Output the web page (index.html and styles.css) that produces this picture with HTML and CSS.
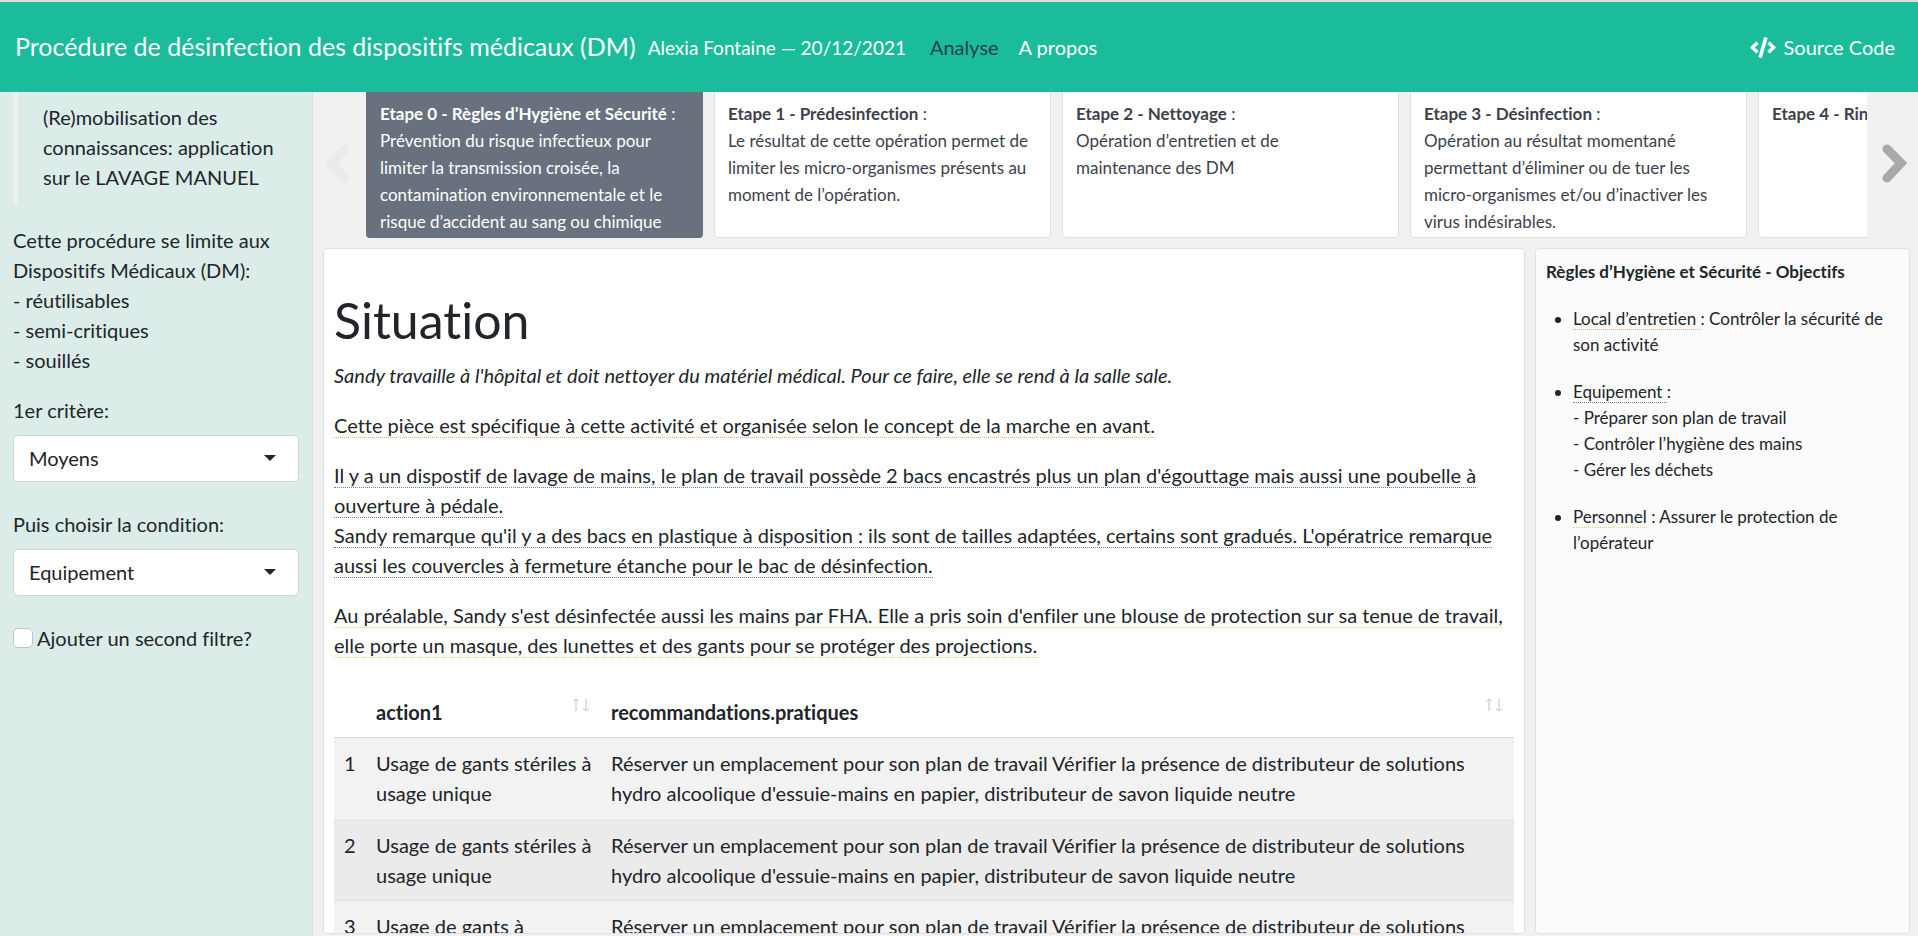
FILE: index.html
```html
<!DOCTYPE html>
<html lang="fr">
<head>
<meta charset="utf-8">
<title>Procédure de désinfection des dispositifs médicaux (DM)</title>
<meta name="viewport" content="width=device-width, initial-scale=1">
<link rel="stylesheet" href="styles.css">
</head>
<body>
<header class="navbar">
  <span class="brand">Procédure de désinfection des dispositifs médicaux (DM)</span>
  <span class="author">Alexia Fontaine — 20/12/2021</span>
  <nav class="nav">
    <a class="nav-link active" href="#analyse">Analyse</a>
    <a class="nav-link" href="#apropos">A propos</a>
  </nav>
  <a class="nav-link source" href="#source">
    <svg class="code-icon" viewBox="0 0 640 512" aria-hidden="true"><path fill="currentColor" d="M278.900 511.500l-61-17.700c-6.400-1.800-10-8.500-8.200-14.900L346.200 8.700c1.800-6.400 8.500-10 14.900-8.200l61 17.700c6.400 1.800 10 8.500 8.200 14.900L293.800 503.300c-1.900 6.400-8.500 10.100-14.900 8.200zm-114-112.200l43.500-46.400c4.600-4.900 4.300-12.700-.8-17.200L117 256l90.600-79.700c5.100-4.500 5.500-12.300.8-17.200l-43.500-46.400c-4.500-4.800-12.100-5.100-17-.5L3.800 247.200c-5.100 4.700-5.100 12.800 0 17.500l144.100 135.100c4.900 4.600 12.500 4.400 17-.5zm327.200.6l144.100-135.100c5.100-4.700 5.100-12.800 0-17.500L492.100 112.100c-4.800-4.500-12.400-4.300-17 .5L431.600 159c-4.600 4.900-4.300 12.700.8 17.200L523 256l-90.600 79.700c-5.100 4.500-5.500 12.300-.8 17.200l43.500 46.400c4.500 4.900 12.100 5.100 17 .6z"/></svg>
    Source Code
  </a>
</header>

<div class="page">
  <aside class="sidebar">
    <blockquote class="quote">(Re)mobilisation des connaissances: application sur le LAVAGE MANUEL</blockquote>
    <p class="note">Cette procédure se limite aux Dispositifs Médicaux (DM):<br>- réutilisables<br>- semi-critiques<br>- souillés</p>
    <div class="field">
      <label for="critere">1er critère:</label>
      <div class="select-wrap">
        <select id="critere"><option>Moyens</option></select>
        <svg class="caret" viewBox="0 0 12 6" aria-hidden="true"><path d="M0 0h12L6 6z"/></svg>
      </div>
    </div>
    <div class="field">
      <label for="condition">Puis choisir la condition:</label>
      <div class="select-wrap">
        <select id="condition"><option>Equipement</option></select>
        <svg class="caret" viewBox="0 0 12 6" aria-hidden="true"><path d="M0 0h12L6 6z"/></svg>
      </div>
    </div>
    <div class="check">
      <input type="checkbox" id="filtre">
      <label for="filtre">Ajouter un second filtre?</label>
    </div>
  </aside>

  <main class="content">
    <section class="steps">
      <button class="arrow prev" type="button" aria-label="Précédent" disabled>
        <svg viewBox="0 0 25 39"><path d="M20 5L6 19L20 34"/></svg>
      </button>
      <div class="track">
        <article class="card current"><strong>Etape 0 - Règles d’Hygiène et Sécurité</strong> :<br>Prévention du risque infectieux pour limiter la transmission croisée, la contamination environnementale et le risque d’accident au sang ou chimique</article>
        <article class="card"><strong>Etape 1 - Prédesinfection</strong> :<br>Le résultat de cette opération permet de limiter les micro-organismes présents au moment de l’opération.</article>
        <article class="card"><strong>Etape 2 - Nettoyage</strong> :<br>Opération d’entretien et de maintenance des DM</article>
        <article class="card"><strong>Etape 3 - Désinfection</strong> :<br>Opération au résultat momentané permettant d’éliminer ou de tuer les micro-organismes et/ou d’inactiver les virus indésirables.</article>
        <article class="card"><strong>Etape 4 - Rinçage</strong> :</article>
      </div>
      <button class="arrow next" type="button" aria-label="Suivant">
        <svg viewBox="0 0 25 39"><path d="M5 5L19 19L5 34"/></svg>
      </button>
    </section>

    <div class="panels">
      <section class="panel situation">
        <h1>Situation</h1>
        <p><em>Sandy travaille à l'hôpital et doit nettoyer du matériel médical. Pour ce faire, elle se rend à la salle sale.</em></p>
        <p><span class="mark local">Cette pièce est spécifique à cette activité et organisée selon le concept de la marche en avant.</span></p>
        <p><span class="mark equipment">Il y a un dispostif de lavage de mains, le plan de travail possède 2 bacs encastrés plus un plan d'égouttage mais aussi une poubelle à ouverture à pédale.<br>Sandy remarque qu'il y a des bacs en plastique à disposition : ils sont de tailles adaptées, certains sont gradués. L'opératrice remarque aussi les couvercles à fermeture étanche pour le bac de désinfection.</span></p>
        <p><span class="mark staff">Au préalable, Sandy s'est désinfectée aussi les mains par FHA. Elle a pris soin d'enfiler une blouse de protection sur sa tenue de travail, elle porte un masque, des lunettes et des gants pour se protéger des projections.</span></p>
        <table class="table">
          <thead>
            <tr>
              <th class="col-index"></th>
              <th class="col-action">action1
                <svg class="sort" viewBox="0 0 18 14" aria-hidden="true"><path d="M4 13V1M1 3.500L4 1L7 3.500M14 1V13M11 10.500L14 13L17 10.500"/></svg>
              </th>
              <th>recommandations.pratiques
                <svg class="sort" viewBox="0 0 18 14" aria-hidden="true"><path d="M4 13V1M1 3.500L4 1L7 3.500M14 1V13M11 10.500L14 13L17 10.500"/></svg>
              </th>
            </tr>
          </thead>
          <tbody>
            <tr><td>1</td><td>Usage de gants stériles à usage unique</td><td>Réserver un emplacement pour son plan de travail Vérifier la présence de distributeur de solutions hydro alcoolique d'essuie-mains en papier, distributeur de savon liquide neutre</td></tr>
            <tr class="hover"><td>2</td><td>Usage de gants stériles à usage unique</td><td>Réserver un emplacement pour son plan de travail Vérifier la présence de distributeur de solutions hydro alcoolique d'essuie-mains en papier, distributeur de savon liquide neutre</td></tr>
            <tr><td>3</td><td>Usage de gants à</td><td>Réserver un emplacement pour son plan de travail Vérifier la présence de distributeur de solutions</td></tr>
          </tbody>
        </table>
      </section>

      <section class="panel goals">
        <h2>Règles d’Hygiène et Sécurité - Objectifs</h2>
        <ul>
          <li><span class="mark local">Local d’entretien </span>: Contrôler la sécurité de son activité</li>
          <li><span class="mark equipment">Equipement </span>:<br>- Préparer son plan de travail<br>- Contrôler l’hygiène des mains<br>- Gérer les déchets</li>
          <li><span class="mark staff">Personnel</span> : Assurer le protection de l’opérateur</li>
        </ul>
      </section>
    </div>
  </main>
</div>
</body>
</html>
```
FILE: styles.css
```css
* { box-sizing: border-box; }

body {
  margin: 0;
  height: 100vh;
  display: flex;
  flex-direction: column;
  overflow: hidden;
  background: #f1f1f1;
  color: #212529;
  font-family: Lato, "Liberation Sans", sans-serif;
  font-size: 20px;
  font-variant-ligatures: none;
  line-height: 30px;
}

/* Navigation bar */
.navbar {
  display: flex;
  align-items: center;
  flex: none;
  height: 92px;
  padding: 0 23px 0 15px;
  border-top: 2px solid #dcdfe0;
  background: #1abc9c;
  color: #fff;
}
.brand { padding-bottom: 2px; font-size: 25px; }
.author { margin-left: 12px; padding-top: 2px; font-size: 19px; }
.nav { display: flex; gap: 20px; margin-left: 24px; }
.nav-link { color: #fff; text-decoration: none; }
.nav-link.active { color: #2c3e50; }
.source { display: flex; align-items: center; gap: 8px; margin-left: auto; }
.code-icon { width: 26px; height: 21px; }

.page { display: flex; flex: 1; min-height: 0; }

/* Sidebar */
.sidebar {
  flex: none;
  width: 313px;
  padding: 0 13px;
  border-right: 1px solid #dee2e6;
  background: #dcece9;
}
.quote {
  margin: 0 0 20px;
  padding: 10px 0 13px 25px;
  border-left: 5px solid #ecf0f1;
}
.note { margin: 0 0 20px; }
.field { margin-bottom: 27px; }
.field label { display: block; margin-bottom: 10px; }
.select-wrap { position: relative; }
select {
  display: block;
  width: 100%;
  height: 47px;
  padding: 0 40px 2px 15px;
  border: 1px solid #ced4da;
  border-radius: 5px;
  appearance: none;
  background: #fff;
  color: #212529;
  font: inherit;
}
.caret {
  position: absolute;
  top: 20px;
  right: 23px;
  width: 12px;
  height: 6px;
  fill: #212529;
  pointer-events: none;
}
.check { display: flex; align-items: center; gap: 4px; }
.check input {
  width: 20px;
  height: 20px;
  margin: 0;
  appearance: none;
  border: 1px solid #bfc4c8;
  border-radius: 5px;
  background: #fff;
}

/* Main column */
.content {
  display: flex;
  flex: 1;
  flex-direction: column;
  min-width: 0;
  gap: 10px;
  padding: 0 8px 2px 10px;
}
.steps { display: flex; flex: none; height: 146px; }
.arrow {
  display: flex;
  flex: none;
  align-items: center;
  width: 43px;
  padding: 0 3px 4px 2px;
  border: 0;
  background: none;
}
.arrow svg {
  width: 25px;
  height: 39px;
  fill: none;
  stroke-width: 9px;
  stroke-linecap: round;
}
.prev svg { stroke: #eaeaea; }
.next { justify-content: flex-end; }
.next svg { stroke: #a9a9a9; }
.track { display: flex; flex: 1; gap: 11px; min-width: 0; overflow: hidden; }
.card {
  flex: none;
  width: 337px;
  padding: 8px 22px 0 13px;
  border: 1px solid #dfe0e1;
  border-top: 0;
  border-radius: 0 0 4px 4px;
  background: #fff;
  color: #3e3f4c;
  font-size: 17px;
  line-height: 27px;
}
.card.current { border-color: #68717d; background: #68717d; color: #fff; }

.panels { display: flex; flex: 1; gap: 10px; min-height: 0; }
.panel {
  overflow: hidden;
  border: 1px solid #dfe0e1;
  border-radius: 4px;
}
.situation { flex: 1; min-width: 0; padding: 41px 10px 0; background: #fff; }
h1 { margin: 0 0 10px; font-size: 50px; font-weight: 400; line-height: 60px; }
p { margin: 0 0 20px; }

.mark { border-bottom: 1px dotted; }
.local { border-color: #f0a87c; }
.equipment { border-color: #5f86b8; }
.staff { border-color: #ecd66c; }

/* Table of recommendations */
.table { width: 100%; border-collapse: separate; border-spacing: 0; table-layout: fixed; }
.table th, .table td { padding: 10px 0 10px 10px; text-align: left; vertical-align: top; }
.table th { position: relative; padding: 17px 10px 10px; border-bottom: 1px solid #d3d4d5; }
.table .col-index { width: 32px; }
.table .col-action { width: 235px; }
.sort {
  position: absolute;
  top: 18px;
  right: 11px;
  width: 18px;
  height: 14px;
  fill: none;
  stroke: #c4c4c4;
}
.table td { border-bottom: 1px solid #fff; background: #f2f2f2; }
.table .hover td {
  border-top: 1px solid #dee2e6;
  border-bottom-color: #dee2e6;
  background: #ebebeb;
}

/* Objectives */
.goals {
  flex: none;
  width: 375px;
  padding: 10px;
  background: #fbfbfb;
  font-size: 17px;
  line-height: 26px;
}
h2 { margin: 0 0 21px; font-size: inherit; font-weight: 700; }
ul { margin: 0; padding-left: 27px; }
li { margin-bottom: 21px; }
```
